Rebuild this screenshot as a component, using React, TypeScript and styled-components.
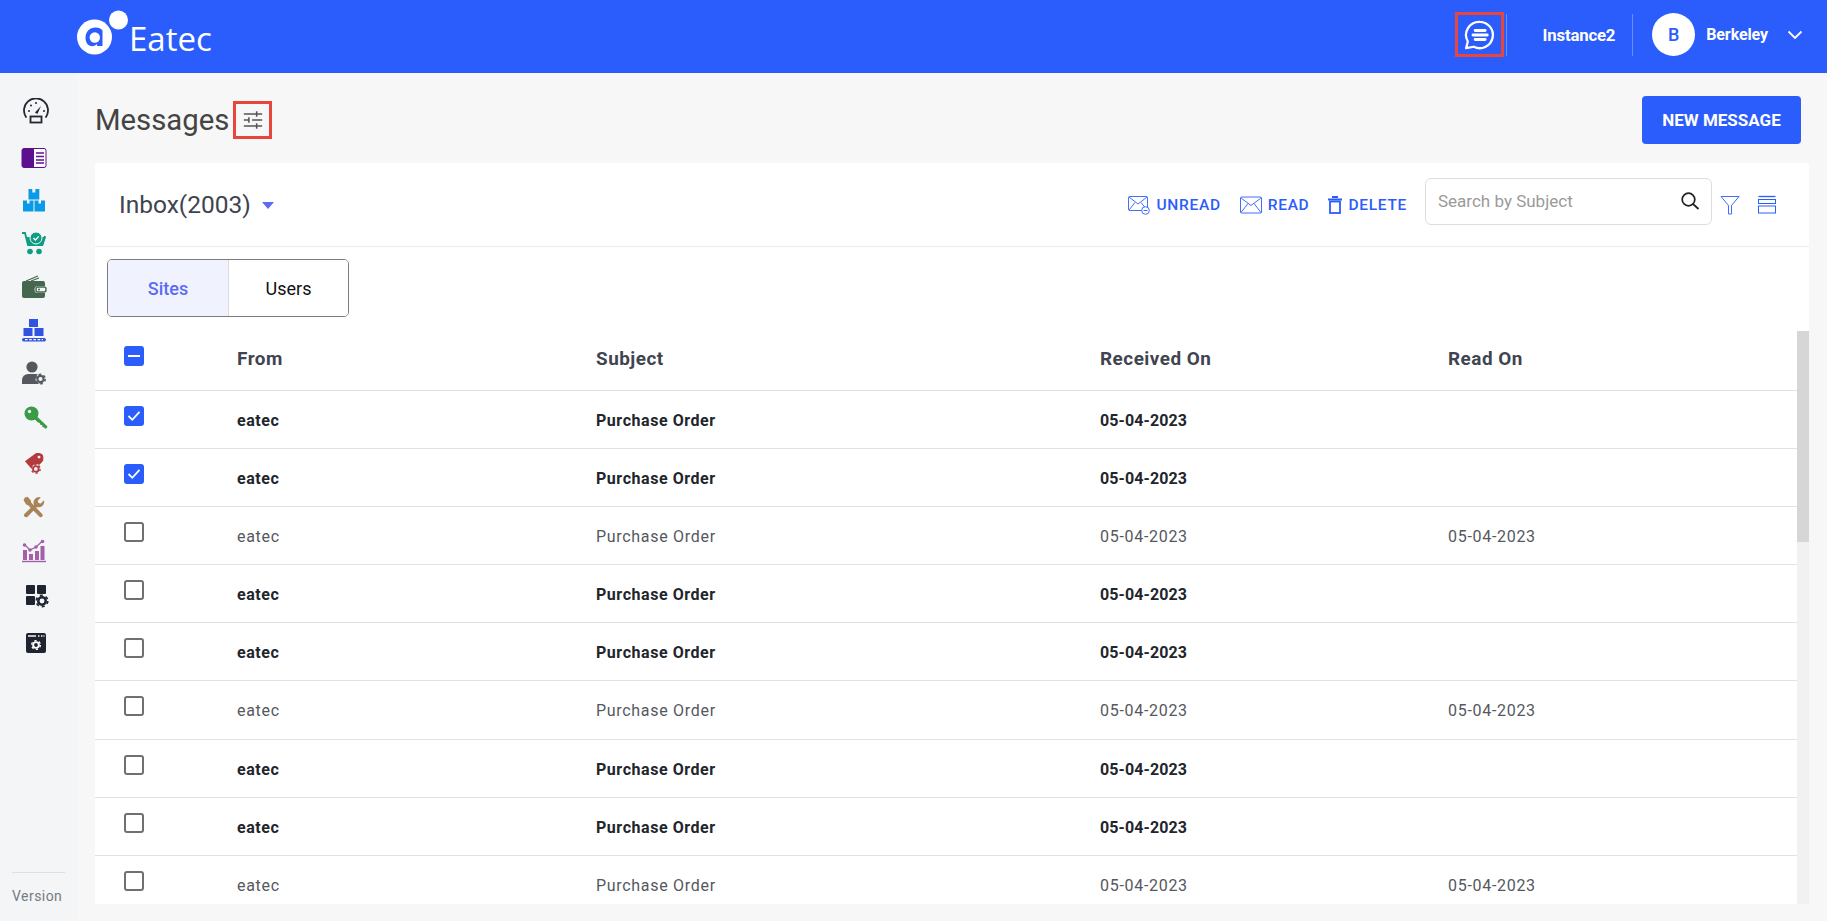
import React from 'react';
import styled, { createGlobalStyle } from 'styled-components';

const BLUE = '#2b5dfc';

const GlobalStyle = createGlobalStyle`
	html, body {
		margin: 0;
		padding: 0;
		height: 100%;
		overflow: hidden;
		font-family: Roboto, 'Liberation Sans', sans-serif;
	}
	* {
		box-sizing: border-box;
	}
`;

type Message = { read: boolean; checked?: boolean };

const messages: Message[] = Array.from({ length: 9 }, (_, i) => ({
	read: i % 3 === 2,
	checked: i < 2
}));

function Gear({ x, y, r, color, hole = '#f3f5f7' }: { x: number; y: number; r: number; color: string; hole?: string }) {
	return (
		<g>
			<circle cx={x} cy={y} r={r} fill={hole} />
			<circle cx={x} cy={y} r={r * 0.62} fill="none" stroke={color} strokeWidth={r * 0.42} />
			<circle cx={x} cy={y} r={r * 0.95} fill="none" stroke={color} strokeWidth={r * 0.3} strokeDasharray={`${r * 0.5} ${r * 0.5}`} />
		</g>
	);
}

// gap: space above the icon, dx: nudge to the right, the menu icons are not evenly placed
const sideIcons = [
	{
		gap: 0,
		dx: 2,
		icon: (
			<svg width="28" height="26" viewBox="0 0 28 26">
				<path d="M4 19A12 12 0 1 1 24 19" fill="none" stroke="#22262e" strokeWidth="1.8" strokeLinecap="round" />
				<path d="M13 14.5 19 8l-3.6 8z" fill="#22262e" />
				<circle cx="7" cy="13" r="1" fill="#22262e" />
				<circle cx="9" cy="7.5" r="1" fill="#22262e" />
				<circle cx="14" cy="5" r="1" fill="#22262e" />
				<circle cx="22" cy="13" r="1" fill="#22262e" />
				<rect x="8.5" y="18.5" width="11" height="6" fill="#f3f5f7" stroke="#22262e" strokeWidth="1.8" />
			</svg>
		)
	},
	{
		gap: 23,
		dx: 0,
		icon: (
			<svg width="26" height="22" viewBox="0 0 26 22">
				<rect x="1" y="1.5" width="24" height="19" rx="2" fill="#fff" stroke="#5c0f8f" strokeWidth="1" />
				<path d="M3 1.5h10v19H3a2 2 0 0 1-2-2v-15a2 2 0 0 1 2-2z" fill="#5c0f8f" />
				<path d="M15 6h8M15 9.5h8M15 13h8M15 16h8" stroke="#5c0f8f" strokeWidth="1.5" />
			</svg>
		)
	},
	{
		gap: 18,
		dx: 0,
		icon: (
			<svg width="24" height="24" viewBox="0 0 24 24" fill="#0a9be8">
				<path d="M6.500 1h3.800v3.500h3V1h4v10.500H6.500z" />
				<path d="M1 12.500h4v3h2.500v-3h4V23.500H1z" />
				<path d="M12.500 12.500h4v3H19v-3h4V23.500H12.500z" />
			</svg>
		)
	},
	{
		gap: 19,
		dx: 0,
		icon: (
			<svg width="26" height="24" viewBox="0 0 26 24">
				<path d="M1 2h3l3 12h14l3-9" fill="none" stroke="#0e9c82" strokeWidth="1.8" />
				<path d="M5 6h20l-3 9H7z" fill="#0e9c82" />
				<circle cx="15" cy="7" r="6" fill="#0e9c82" stroke="#f3f5f7" strokeWidth="1" />
				<path d="M12.4 7l2 2 3.4-3.6" fill="none" stroke="#fff" strokeWidth="1.3" />
				<circle cx="9" cy="20.5" r="2.8" fill="#0e9c82" />
				<circle cx="18" cy="20.5" r="2.8" fill="#0e9c82" />
			</svg>
		)
	},
	{
		gap: 20,
		dx: 0,
		icon: (
			<svg width="26" height="24" viewBox="0 0 26 24">
				<path d="M5 6 17 1M10 6l8-3" stroke="#45664f" strokeWidth="1.2" fill="none" />
				<path d="M3 6h19a2 2 0 0 1 2 2v3h-7a3.5 3.5 0 0 0 0 7h7v3a2 2 0 0 1-2 2H3a2 2 0 0 1-2-2V8a2 2 0 0 1 2-2z" fill="#45664f" />
				<rect x="15" y="12" width="10" height="5" rx="2" fill="none" stroke="#45664f" strokeWidth="1.4" />
				<circle cx="18" cy="14.5" r="1" fill="#45664f" />
			</svg>
		)
	},
	{
		gap: 19,
		dx: 0,
		icon: (
			<svg width="26" height="24" viewBox="0 0 26 24">
				<rect x="8" y="1" width="9" height="8" fill="#3154e0" />
				<rect x="2.5" y="10" width="9" height="8" fill="#3154e0" />
				<rect x="13.5" y="10" width="9" height="8" fill="#3154e0" />
				<rect x="1" y="20" width="24" height="3.4" rx="1.7" fill="#3154e0" />
				<path d="M4 21.7h18" stroke="#fff" strokeWidth="1.2" strokeDasharray="2.6 1.6" />
			</svg>
		)
	},
	{
		gap: 19,
		dx: 0,
		icon: (
			<svg width="26" height="24" viewBox="0 0 26 24">
				<circle cx="11" cy="6" r="5.6" fill="#55585e" />
				<path d="M1 23v-4a6 6 0 0 1 6-6h8a6 6 0 0 1 5 3v7z" fill="#55585e" />
				<Gear x={19.5} y={18} r={5} color="#55585e" />
			</svg>
		)
	},
	{
		gap: 21,
		dx: 2,
		icon: (
			<svg width="24" height="24" viewBox="0 0 24 24">
				<circle cx="7.5" cy="7.5" r="7" fill="#3a9a45" />
				<circle cx="5.500" cy="5.500" r="1.700" fill="#f3f5f7" />
				<path d="M10 12.500 12.500 10 23.500 20.500 22 23l-2-1.500-1.500-.5-.5-2-1.800-.3-.4-1.700-1.800-.4z" fill="#3a9a45" />
			</svg>
		)
	},
	{
		gap: 21,
		dx: 0,
		icon: (
			<svg width="20" height="22" viewBox="0 0 22 24">
				<path d="M1 10 13 1.4c2-1 6-.6 7.5 1.4 1 1.6 1 5 .4 7L17 14a7 7 0 0 0-9 4z" fill="#b53a3f" />
				<circle cx="16.5" cy="5.5" r="1.6" fill="#f3f5f7" />
				<Gear x={13} y={18.5} r={5} color="#b53a3f" />
			</svg>
		)
	},
	{
		gap: 20,
		dx: 0,
		icon: (
			<svg width="22" height="22" viewBox="0 0 24 24" fill="#a98459">
				<path d="M2 1.500 5 .8l3.600 4 .3 2.400 12 12.300a2.200 2.200 0 0 1-3 3.200L5.600 10 3.500 9.300.6 4.500z" />
				<path d="M22.800 4.500a6 6 0 0 1-7.600 7.500L5 22.500a2.200 2.200 0 0 1-3.200-3.200L12 9.500a6 6 0 0 1 7.500-8l-3.300 3.300.5 2.800 2.800.5z" />
			</svg>
		)
	},
	{
		gap: 20,
		dx: 0,
		icon: (
			<svg width="24" height="24" viewBox="0 0 24 24">
				<path d="M2.500 5.500 8 11l6-3 6.500-6" fill="none" stroke="#a55fa8" strokeWidth="1.3" />
				<circle cx="2.500" cy="6" r="1.800" fill="#a55fa8" />
				<circle cx="8" cy="11" r="1.800" fill="#a55fa8" />
				<circle cx="14" cy="8" r="1.800" fill="#a55fa8" />
				<circle cx="20.500" cy="2.500" r="1.800" fill="#a55fa8" />
				<path d="M1 11h4v10H1zM7 15h4v6H7zM13 12h4v9h-4zM18.500 7h4v14h-4z" fill="#a55fa8" />
				<path d="M0 22.500h24" stroke="#a55fa8" strokeWidth="1.400" />
			</svg>
		)
	},
	{
		gap: 21,
		dx: 3,
		icon: (
			<svg width="24" height="24" viewBox="0 0 24 24">
				<rect x="1" y="1" width="9" height="9" rx="1" fill="#1f2530" />
				<rect x="12" y="1" width="9" height="9" rx="1" fill="#1f2530" />
				<rect x="1" y="12" width="9" height="9" rx="1" fill="#1f2530" />
				<Gear x={17} y={17} r={6} color="#1f2530" />
			</svg>
		)
	},
	{
		gap: 23,
		dx: 2,
		icon: (
			<svg width="22" height="24" viewBox="0 0 22 24">
				<rect x="1" y="2" width="20" height="20" rx="2" fill="#1f2530" />
				<path d="M3 5h8M13 5h1.500M16 5h1.500M18.500 5h1" stroke="#f3f5f7" strokeWidth="1.400" />
				<Gear x={11} y={14} r={4.600} color="#fff" hole="#1f2530" />
			</svg>
		)
	}
];

function App() {
	return (
		<Page>
			<GlobalStyle />
			<TopBar>
				<Logo>
					<svg width="54" height="46" viewBox="0 0 54 46">
						<circle cx="18.500" cy="28" r="17.500" fill="#fff" />
						<path d="M9.500 29c0-6.500 4.500-10.500 10-10.500 3.500 0 5.500 1 7 3V37h-5.200l-.6-2c-1 1.300-2.500 2.200-4.500 2.200-3.800 0-6.700-3.300-6.700-8.200z" fill={BLUE} />
						<circle cx="18.800" cy="28.500" r="5.200" fill="#fff" />
						<circle cx="42.500" cy="11" r="9.500" fill="#fff" />
					</svg>
					<LogoName>Eatec</LogoName>
				</Logo>
				<TopRight>
					<ChatMark>
						<svg width="34" height="34" viewBox="0 0 24 24" fill="none" stroke="#fff">
							<path d="M12.600 2.700a9.300 9.300 0 1 1-4.300 17.600L2.900 21.300l1.200-4.700A9.300 9.300 0 0 1 12.600 2.700z" strokeWidth="1.600" strokeLinejoin="round" />
							<path d="M9.300 8.800h7M7.800 12h10M9.300 15.200h7" strokeWidth="2.100" strokeLinecap="round" />
						</svg>
					</ChatMark>
					<TopDivider />
					<InstanceName>Instance2</InstanceName>
					<TopDivider />
					<Avatar>B</Avatar>
					<UserName>Berkeley</UserName>
					<svg width="16" height="10" viewBox="0 0 16 10" fill="none" stroke="#fff" strokeWidth="1.800">
						<path d="M1.500 1.500 8 8l6.500-6.500" />
					</svg>
				</TopRight>
			</TopBar>
			<Body>
				<SideBar>
					<SideList>
						{sideIcons.map((item, i) => (
							<SideItem key={i} $gap={item.gap} $dx={item.dx}>
								{item.icon}
							</SideItem>
						))}
					</SideList>
					<VersionBox>Version</VersionBox>
				</SideBar>
				<Main>
					<TitleRow>
						<Title>Messages</Title>
						<TuneMark>
							<svg width="22" height="22" viewBox="0 0 24 24" fill="none" stroke="#555" strokeWidth="1.700">
								<path d="M2 5.500h20M16 2.500v6M2 12h5M7.500 9v6M11 12h11M2 18.500h20M16 15.500v6" />
							</svg>
						</TuneMark>
						<NewButton>NEW MESSAGE</NewButton>
					</TitleRow>
					<Card>
						<Toolbar>
							<InboxName>Inbox(2003)</InboxName>
							<Caret />
							<Actions>
								<ActionLink>
									<svg width="22" height="20" viewBox="0 0 22 20" fill="none" stroke={BLUE} strokeWidth="0.900">
										<rect x="0.500" y="1.500" width="19" height="14" rx="1" />
										<path d="M1 2l9 7 9-7M1 15l6-7.500M19 15l-6-7.500" />
										<circle cx="17.500" cy="15.500" r="3.800" fill="#fff" />
										<path d="M15.500 15.500h4" />
									</svg>
									UNREAD
								</ActionLink>
								<ActionLink>
									<svg width="22" height="20" viewBox="0 0 22 20" fill="none" stroke={BLUE} strokeWidth="0.900">
										<rect x="0.500" y="2" width="21" height="16" rx="1" />
										<path d="M1 3l10 7.500L21 3M1 17.500l7-9M21 17.500l-7-9" />
									</svg>
									READ
								</ActionLink>
								<ActionLink>
									<svg width="14" height="18" viewBox="0 0 14 18" fill="none" stroke={BLUE}>
										<path d="M4 1h6M0 3.500h14" strokeWidth="1.800" />
										<rect x="2" y="5.500" width="10" height="11.500" strokeWidth="1.800" />
									</svg>
									DELETE
								</ActionLink>
							</Actions>
							<SearchBox>
								<SearchInput placeholder="Search by Subject" />
								<svg width="20" height="20" viewBox="0 0 20 20" fill="none" stroke="#222" strokeWidth="1.700">
									<circle cx="8.500" cy="8.500" r="6.300" />
									<path d="M13 13l5.500 5" />
								</svg>
							</SearchBox>
							<FunnelBtn>
								<svg width="20" height="20" viewBox="0 0 20 20" fill="none" stroke={BLUE} strokeWidth="0.900">
									<path d="M1 1.500h18l-7.500 9V19H8.500v-8.500z" />
								</svg>
							</FunnelBtn>
							<DensityBtn>
								<svg width="20" height="20" viewBox="0 0 20 20" fill="none" stroke={BLUE} strokeWidth="1">
									<path d="M1.500 1.500h17" strokeWidth="1.300" />
									<rect x="1.500" y="4.500" width="17" height="4" />
									<rect x="1.500" y="11" width="17" height="7" />
								</svg>
							</DensityBtn>
						</Toolbar>
						<Tabs>
							<Tab $active>Sites</Tab>
							<Tab>Users</Tab>
						</Tabs>
						<TableArea>
							<TableClip>
								<HeadRow>
									<CheckCell>
										<Check $state="mixed">
											<svg width="12" height="12" viewBox="0 0 12 12"><path d="M0 6h12" stroke="#fff" strokeWidth="2" /></svg>
										</Check>
									</CheckCell>
									<HeadCell>From</HeadCell>
									<HeadCell>Subject</HeadCell>
									<HeadCell>Received On</HeadCell>
									<HeadCell>Read On</HeadCell>
								</HeadRow>
								{messages.map((m, i) => (
									<MessageRow key={i}>
										<CheckCell>
											<Check $state={m.checked ? 'on' : 'off'}>
												{m.checked && (
													<svg width="14" height="12" viewBox="0 0 14 12" fill="none">
														<path d="M1.500 6l3.800 3.800 7.200-8" stroke="#fff" strokeWidth="1.800" />
													</svg>
												)}
											</Check>
										</CheckCell>
										<BodyCell $read={m.read}>eatec</BodyCell>
										<BodyCell $read={m.read}>Purchase Order</BodyCell>
										<BodyCell $read={m.read} $date>05-04-2023</BodyCell>
										<BodyCell $read={m.read} $date>{m.read ? '05-04-2023' : ''}</BodyCell>
									</MessageRow>
								))}
							</TableClip>
							<ScrollTrack>
								<ScrollThumb />
							</ScrollTrack>
						</TableArea>
					</Card>
				</Main>
			</Body>
		</Page>
	);
}

const Page = styled.div`
	width: 100%;
	height: 921px;
	display: flex;
	flex-direction: column;
	background: #f7f7f7;
`;

const TopBar = styled.header`
	height: 73px;
	flex-shrink: 0;
	background: ${BLUE};
	display: flex;
	align-items: center;
	padding: 0 24px 0 76px;
	color: #fff;
`;

const Logo = styled.div`
	display: flex;
	align-items: flex-start;
	height: 73px;
	padding-top: 9px;
`;

const LogoName = styled.span`
	font-family: 'Open Sans', Roboto, sans-serif;
	font-size: 33px;
	font-weight: 400;
	line-height: 46px;
	margin: 7px 0 0 -1px;
`;

const TopRight = styled.div`
	margin-left: auto;
	display: flex;
	align-items: center;
	height: 100%;
	padding-bottom: 4px;
`;

const ChatMark = styled.div`
	width: 49px;
	height: 45px;
	margin-right: 2px;
	border: 3px solid #e8453c;
	display: flex;
	align-items: center;
	justify-content: center;
`;

const TopDivider = styled.div`
	width: 1px;
	height: 42px;
	background: rgba(255, 255, 255, 0.3);
`;

const InstanceName = styled.span`
	margin: 0 17px 0 36px;
	font-size: 16.8px;
	font-weight: 700;
	letter-spacing: -0.2px;
`;

const Avatar = styled.div`
	width: 43px;
	height: 43px;
	margin-left: 19px;
	border-radius: 50%;
	background: #fff;
	color: ${BLUE};
	display: flex;
	align-items: center;
	justify-content: center;
	font-size: 18px;
	font-weight: 500;
`;

const UserName = styled.span`
	margin: -1px 19px 0 11px;
	font-size: 16px;
	font-weight: 700;
	letter-spacing: -0.1px;
`;

const Body = styled.div`
	flex: 1;
	display: flex;
	min-height: 0;
`;

const SideBar = styled.nav`
	width: 77px;
	flex-shrink: 0;
	background: #f3f5f7;
	display: flex;
	flex-direction: column;
	padding-top: 26px;
`;

const SideList = styled.div`
	display: flex;
	flex-direction: column;
`;

const SideItem = styled.div<{ $gap: number; $dx: number }>`
	height: 24px;
	margin-top: ${(p) => p.$gap}px;
	display: flex;
	align-items: center;
	justify-content: center;
	padding-right: 9px;
	padding-left: ${(p) => p.$dx * 2}px;
`;

const VersionBox = styled.div`
	margin: auto 12px 0;
	padding: 15px 0 17px;
	border-top: 1px solid #dcdfe3;
	font-size: 14px;
	letter-spacing: 0.45px;
	color: #777b80;
`;

const Main = styled.main`
	flex: 1;
	min-width: 0;
	display: flex;
	flex-direction: column;
	padding: 0 18px 17px;
`;

const TitleRow = styled.div`
	height: 90px;
	flex-shrink: 0;
	display: flex;
	align-items: center;
	padding: 3px 8px 0 0;
`;

const Title = styled.h1`
	margin: 0;
	font-size: 29.3px;
	font-weight: 400;
	color: #444;
`;

const TuneMark = styled.div`
	width: 39px;
	height: 38px;
	margin-left: 4px;
	border: 3px solid #e8453c;
	display: flex;
	align-items: center;
	justify-content: center;
`;

const NewButton = styled.button`
	margin-left: auto;
	width: 159px;
	height: 48px;
	border: none;
	border-radius: 4px;
	background: ${BLUE};
	color: #fff;
	font-family: inherit;
	font-size: 17px;
	font-weight: 700;
`;

const Card = styled.section`
	flex: 1;
	min-height: 0;
	background: #fff;
	display: flex;
	flex-direction: column;
`;

const Toolbar = styled.div`
	height: 84px;
	flex-shrink: 0;
	display: flex;
	align-items: center;
	padding: 0 32px 0 24px;
	border-bottom: 1px solid #ececec;
`;

const InboxName = styled.span`
	font-size: 24.5px;
	color: #3f4450;
`;

const Caret = styled.span`
	margin: 2px 0 0 11px;
	border-left: 6.5px solid transparent;
	border-right: 6.5px solid transparent;
	border-top: 7px solid #5b6af8;
`;

const Actions = styled.div`
	margin-left: auto;
	display: flex;
	align-items: center;
	gap: 19px;
	margin-right: 18px;
`;

const ActionLink = styled.a`
	display: flex;
	align-items: center;
	gap: 6px;
	font-size: 15.5px;
	font-weight: 500;
	letter-spacing: 0.7px;
	color: ${BLUE};
`;

const SearchBox = styled.div`
	width: 287px;
	height: 47px;
	margin-bottom: 7px;
	border: 1px solid #dedede;
	border-radius: 6px;
	display: flex;
	align-items: center;
	padding: 0 11px 0 10px;
`;

const SearchInput = styled.input`
	flex: 1;
	min-width: 0;
	border: none;
	outline: none;
	font-family: inherit;
	font-size: 17px;
	color: #333;

	&::placeholder {
		color: #9a9a9a;
	}
`;

const FunnelBtn = styled.div`
	display: flex;
	margin: 0 0 0 8px;
`;

const DensityBtn = styled.div`
	display: flex;
	margin-left: 17px;
`;

const Tabs = styled.div`
	width: 242px;
	height: 58px;
	flex-shrink: 0;
	margin: 12px 0 14px 12px;
	border: 1px solid #7c7c7c;
	border-radius: 5px;
	overflow: hidden;
	display: flex;
`;

const Tab = styled.div<{ $active?: boolean }>`
	flex: ${(p) => (p.$active ? '0 0 121px' : '1')};
	display: flex;
	align-items: center;
	justify-content: center;
	font-size: 18px;
	font-weight: ${(p) => (p.$active ? 500 : 400)};
	color: ${(p) => (p.$active ? '#5b6af8' : '#111')};
	background: ${(p) => (p.$active ? '#f0f3fd' : '#fff')};
	border-right: ${(p) => (p.$active ? '1px solid #dcdcdc' : 'none')};
`;

const TableArea = styled.div`
	flex: 1;
	min-height: 0;
	display: flex;
`;

const TableClip = styled.div`
	flex: 1;
	min-width: 0;
	overflow: hidden;
`;

const ScrollTrack = styled.div`
	width: 12px;
	flex-shrink: 0;
	background: #f1f1f1;
`;

const ScrollThumb = styled.div`
	height: 211px;
	background: #d6d6d6;
`;

const Row = styled.div`
	display: grid;
	grid-template-columns: 142px 359px 504px 348px 1fr;
	border-bottom: 1px solid #e2e2e2;
`;

const HeadRow = styled(Row)`
	height: 60px;
`;

const MessageRow = styled(Row)`
	height: 58.1px;
`;

const CheckCell = styled.div`
	padding: 15px 0 0 29px;
`;

const Check = styled.div<{ $state: 'on' | 'off' | 'mixed' }>`
	width: 20px;
	height: 20px;
	border-radius: 3px;
	display: flex;
	align-items: center;
	justify-content: center;
	background: ${(p) => (p.$state === 'off' ? '#fff' : BLUE)};
	border: ${(p) => (p.$state === 'off' ? '2px solid #707070' : 'none')};
`;

const HeadCell = styled.div`
	padding-top: 17px;
	font-size: 18.9px;
	line-height: 22px;
	font-weight: 700;
	letter-spacing: 0.5px;
	color: #3f4450;
`;

const BodyCell = styled.div<{ $read: boolean; $date?: boolean }>`
	padding-top: 20px;
	font-size: 16px;
	line-height: 20px;
	letter-spacing: ${(p) => (p.$read ? '0.7px' : p.$date ? '0.1px' : '0.55px')};
	font-weight: ${(p) => (p.$read ? 400 : 700)};
	color: ${(p) => (p.$read ? '#55585e' : '#22252c')};
`;

export default App;
